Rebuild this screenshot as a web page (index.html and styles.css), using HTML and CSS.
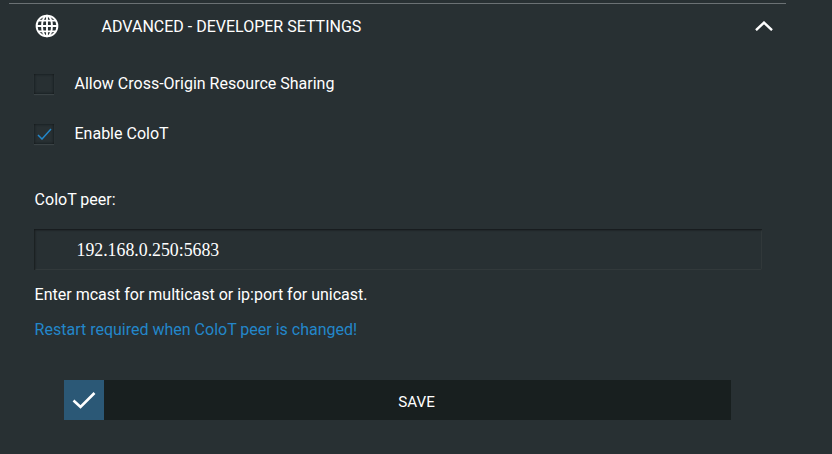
FILE: index.html
```html
<!DOCTYPE html>
<html lang="en">
<head>
<meta charset="utf-8">
<title>Advanced - Developer Settings</title>
<link rel="stylesheet" href="styles.css">
</head>
<body>
<section class="panel">
  <header class="panel-head">
    <svg class="globe" viewBox="0 0 24 24" width="24" height="24" fill="none" stroke="#fff" stroke-width="1.9">
      <circle cx="12" cy="12" r="10.4"/>
      <ellipse cx="12" cy="12" rx="5" ry="10.4"/>
      <path d="M12 1.6v20.8M1.6 12h20.8M3.2 6.6h17.6M3.2 17.4h17.6"/>
    </svg>
    <h2 class="panel-title">ADVANCED - DEVELOPER SETTINGS</h2>
    <svg class="chevron" viewBox="0 0 18 10" width="18" height="10" fill="none" stroke="#fff" stroke-width="2.4">
      <path d="M1 9.2 9 1.6l8 7.6"/>
    </svg>
  </header>
  <div class="panel-body">
    <label class="check-row">
      <span class="check"></span>
      <span class="check-text">Allow Cross-Origin Resource Sharing</span>
    </label>
    <label class="check-row">
      <span class="check">
        <svg class="tick" viewBox="0 0 16 12" width="16" height="12" fill="none" stroke="#2387ca" stroke-width="1.5"><path d="M1 7l4 4 9-10"/></svg>
      </span>
      <span class="check-text">Enable ColoT</span>
    </label>
    <div class="field-label">ColoT peer:</div>
    <div class="input">192.168.0.250:5683</div>
    <p class="hint">Enter mcast for multicast or ip:port for unicast.</p>
    <p class="warn">Restart required when ColoT peer is changed!</p>
    <div class="save">
      <span class="save-icon">
        <svg viewBox="0 0 24 18" width="24" height="18" fill="none" stroke="#fff" stroke-width="2.6"><path d="M1.5 9.5 8.5 16 22.5 2"/></svg>
      </span>
      <span class="save-text">SAVE</span>
    </div>
  </div>
</section>
</body>
</html>
```
FILE: styles.css
```css
html, body {
  margin: 0;
  height: 100%;
  overflow: hidden;
  background: #283033;
}
body {
  font-family: Roboto, "Liberation Sans", sans-serif;
  font-size: 16px;
  color: #fff;
  padding-top: 3px;
  box-sizing: border-box;
}
.panel {
  width: 777px;
  margin-left: 9px;
  border-top: 1px solid #6b7174;
}
.panel-head {
  display: flex;
  align-items: center;
  height: 44px;
  padding-left: 26px;
  padding-right: 13px;
}
.globe { flex: none; }
.panel-title {
  flex: 1;
  margin: 0 0 0 42.6px;
  font-size: 16px;
  font-weight: 400;
}
.chevron { flex: none; }
.panel-body {
  padding: 26px 0 0 25px;
}
.check-row {
  display: flex;
  align-items: center;
  gap: 20.5px;
  height: 20px;
  margin-bottom: 30px;
}
.check-text { margin-bottom: 2px; }
.check {
  display: flex;
  align-items: center;
  justify-content: center;
  width: 20px;
  height: 20px;
  box-sizing: border-box;
  background: #283033;
  box-shadow: inset 0 0 3px #0e1214, 0 1px 1px #3a4245;
}
.tick { margin-left: 1px; }
.field-label {
  margin-top: 46px;
  padding-left: 0.6px;
  line-height: 20px;
}
.input {
  display: flex;
  align-items: center;
  width: 728px;
  height: 41px;
  margin-top: 19px;
  padding: 2px 0 0 42.5px;
  box-sizing: border-box;
  font-family: "Liberation Serif", serif;
  font-size: 17.8px;
  background: #283033;
  box-shadow: inset 0 1px 2px #14181a, inset 1px 0 2px #1c2123, inset -1px 0 1px #424a4d, inset 0 -1px 1px #424a4d;
}
.hint, .warn {
  margin: 0;
  padding-left: 0.6px;
  line-height: 20px;
}
.hint { margin-top: 15px; }
.warn { margin-top: 15px; color: #2387ca; }
.save {
  display: flex;
  width: 667px;
  height: 40px;
  margin: 40px 0 0 30px;
  background: #181f1f;
}
.save-icon {
  display: flex;
  align-items: center;
  justify-content: center;
  flex: none;
  width: 40px;
  background: #2b5876;
}
.save-text {
  flex: 1;
  align-self: center;
  text-align: center;
  font-size: 15.2px;
  padding: 3px 2px 0 0;
  font-weight: 400;
}
```
